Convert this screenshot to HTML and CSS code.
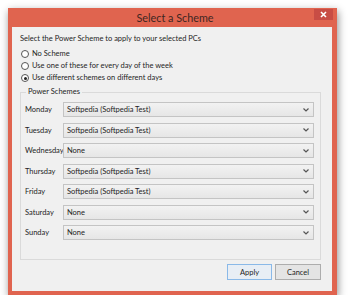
FILE: index.html
```html
<!DOCTYPE html>
<html>
<head>
<meta charset="utf-8">
<link rel="stylesheet" href="styles.css">
</head>
<body>
<div class="window">
  <div class="titlebar">
    <span class="title">Select a Scheme</span>
    <span class="close"><svg width="7" height="7" viewBox="0 0 7 7"><path d="M1 1L6 6M6 1L1 6" stroke="#fff" stroke-width="1.6"/></svg></span>
  </div>
  <div class="content">
    <p class="intro">Select the Power Scheme to apply to your selected PCs</p>
    <div class="radios">
      <div class="radio"><span class="dot"></span>No Scheme</div>
      <div class="radio"><span class="dot"></span>Use one of these for every day of the week</div>
      <div class="radio"><span class="dot checked"></span>Use different schemes on different days</div>
    </div>
    <fieldset class="group">
      <legend>Power Schemes</legend>
      <div class="rows">
        <span class="day">Monday</span><div class="combo"><span>Softpedia (Softpedia Test)</span><svg class="chev" width="6" height="4" viewBox="0 0 6 4"><path d="M0.5 0.5L3 3L5.5 0.5" fill="none" stroke="#555" stroke-width="1.2"/></svg></div>
        <span class="day">Tuesday</span><div class="combo"><span>Softpedia (Softpedia Test)</span><svg class="chev" width="6" height="4" viewBox="0 0 6 4"><path d="M0.5 0.5L3 3L5.5 0.5" fill="none" stroke="#555" stroke-width="1.2"/></svg></div>
        <span class="day">Wednesday</span><div class="combo"><span>None</span><svg class="chev" width="6" height="4" viewBox="0 0 6 4"><path d="M0.5 0.5L3 3L5.5 0.5" fill="none" stroke="#555" stroke-width="1.2"/></svg></div>
        <span class="day">Thursday</span><div class="combo"><span>Softpedia (Softpedia Test)</span><svg class="chev" width="6" height="4" viewBox="0 0 6 4"><path d="M0.5 0.5L3 3L5.5 0.5" fill="none" stroke="#555" stroke-width="1.2"/></svg></div>
        <span class="day">Friday</span><div class="combo"><span>Softpedia (Softpedia Test)</span><svg class="chev" width="6" height="4" viewBox="0 0 6 4"><path d="M0.5 0.5L3 3L5.5 0.5" fill="none" stroke="#555" stroke-width="1.2"/></svg></div>
        <span class="day">Saturday</span><div class="combo"><span>None</span><svg class="chev" width="6" height="4" viewBox="0 0 6 4"><path d="M0.5 0.5L3 3L5.5 0.5" fill="none" stroke="#555" stroke-width="1.2"/></svg></div>
        <span class="day">Sunday</span><div class="combo"><span>None</span><svg class="chev" width="6" height="4" viewBox="0 0 6 4"><path d="M0.5 0.5L3 3L5.5 0.5" fill="none" stroke="#555" stroke-width="1.2"/></svg></div>
      </div>
    </fieldset>
    <div class="buttons">
      <div class="btn default">Apply</div>
      <div class="btn">Cancel</div>
    </div>
  </div>
</div>
</body>
</html>
```

FILE: styles.css
```css
html, body {
  margin: 0;
  padding: 0;
  background: #ffffff;
}
body {
  font-family: Lato, "Open Sans", sans-serif;
  font-size: 7.5px;
  color: #1e1e1e;
}
.window {
  margin: 8px 0 0 8px;
  width: 329px;
  background: #e0644f;
  box-shadow: 1px 3px 8px rgba(0, 0, 0, 0.45);
  padding: 0 5px 4px 4px;
  box-sizing: border-box;
}
.titlebar {
  height: 19px;
  display: flex;
  align-items: center;
  justify-content: center;
  position: relative;
}
.title {
  font-size: 10.8px;
  color: #3e2622;
  margin-left: 6px;
}
.close {
  position: absolute;
  right: -1px;
  top: 1px;
  width: 19px;
  height: 11px;
  background: #c84d45;
  display: flex;
  align-items: center;
  justify-content: center;
}
.content {
  background: #f0f0f0;
  padding: 6px 11px 11px 8px;
  height: 264px;
  box-sizing: border-box;
  display: flex;
  flex-direction: column;
}
.intro {
  margin: 0;
  line-height: 12px;
}
.radios {
  margin-top: 3px;
}
.radio {
  display: flex;
  align-items: center;
  height: 12px;
  line-height: 12px;
}
.dot {
  width: 6px;
  height: 6px;
  border: 1px solid #555;
  border-radius: 50%;
  background: #fff;
  margin: 0 3px 0 1px;
  position: relative;
}
.dot.checked::after {
  content: "";
  position: absolute;
  left: 1.5px;
  top: 1.5px;
  width: 3px;
  height: 3px;
  border-radius: 50%;
  background: #222;
}
.group {
  margin: 2px 0 0 0;
  padding: 4px 6px 19px 4px;
  border: 1px solid #dadada;
  min-width: 0;
}
.group legend {
  padding: 0 2px;
  margin-left: 1px;
  line-height: 12px;
}
.rows {
  display: grid;
  grid-template-columns: 38px 1fr;
  grid-auto-rows: 15px;
  row-gap: 5.5px;
  align-items: center;
}
.day {
  white-space: nowrap;
}
.combo {
  height: 15px;
  box-sizing: border-box;
  border: 1px solid #c4c4c4;
  background: linear-gradient(#f2f2f2, #e6e6e6);
  display: flex;
  align-items: center;
  justify-content: space-between;
  padding: 0 4px 0 3px;
}
.buttons {
  display: flex;
  justify-content: flex-end;
  gap: 3px;
  margin-top: 4px;
}
.btn {
  width: 45px;
  height: 16px;
  box-sizing: border-box;
  border: 1px solid #adadad;
  background: #e4e4e4;
  display: flex;
  align-items: center;
  justify-content: center;
}
.btn + .btn {
  width: 46px;
}
.btn.default {
  border-color: #8ab9e8;
  background: #e8eef5;
}
```
